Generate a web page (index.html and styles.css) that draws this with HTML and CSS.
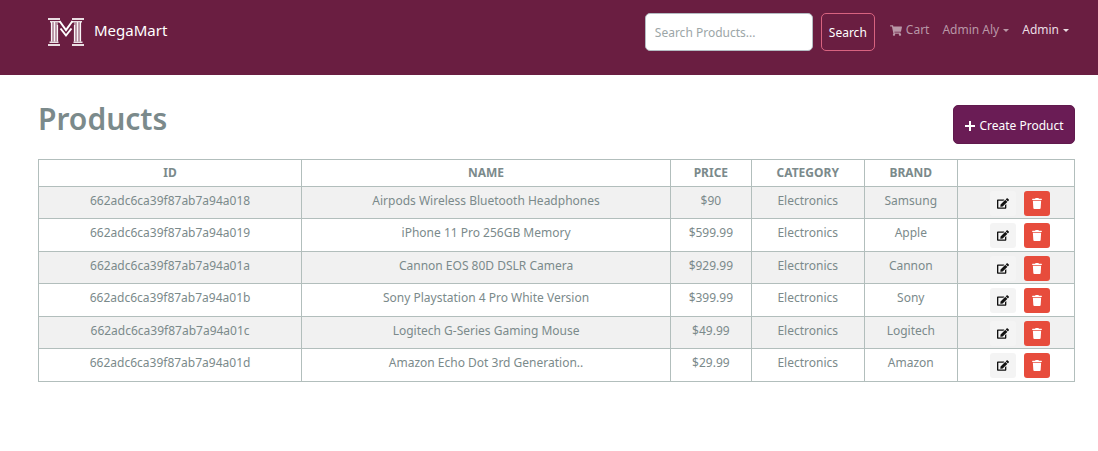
FILE: index.html
```html
<!DOCTYPE html>
<html lang="en">
<head>
<meta charset="utf-8">
<meta name="viewport" content="width=device-width, initial-scale=1">
<title>MegaMart - Products</title>
<link rel="stylesheet" href="styles.css">
</head>
<body>
<svg class="sprite" aria-hidden="true">
  <symbol id="edit" viewBox="0 0 576 512"><path d="M402.6 83.2l90.2 90.2c3.8 3.8 3.8 10 0 13.8L274.400 405.600l-92.800 10.300c-12.400 1.400-22.900-9.100-21.500-21.500l10.300-92.800L388.800 83.200c3.800-3.800 10-3.800 13.800 0zm162-22.900l-48.800-48.800c-15.200-15.200-39.900-15.200-55.200 0l-35.400 35.400c-3.800 3.800-3.800 10 0 13.800l90.200 90.200c3.800 3.800 10 3.800 13.800 0l35.400-35.400c15.200-15.300 15.200-40 0-55.200zM384 346.200V448H64V128h229.800c3.200 0 6.200-1.300 8.500-3.500l40-40c7.600-7.600 2.200-20.500-8.500-20.500H48C21.500 64 0 85.500 0 112v352c0 26.500 21.500 48 48 48h352c26.500 0 48-21.500 48-48V306.200c0-10.700-12.900-16-20.500-8.500l-40 40c-2.200 2.300-3.500 5.300-3.500 8.500z"/></symbol>
  <symbol id="trash" viewBox="0 0 448 512"><path d="M432 32H312l-9.400-18.700A24 24 0 0 0 281.100 0H166.800a23.700 23.700 0 0 0-21.400 13.300L136 32H16A16 16 0 0 0 0 48v32a16 16 0 0 0 16 16h416a16 16 0 0 0 16-16V48a16 16 0 0 0-16-16zM53.200 467a48 48 0 0 0 47.900 45h245.800a48 48 0 0 0 47.900-45L416 128H32z"/></symbol>
</svg>
<header class="navbar">
  <a class="brand" href="#">
    <svg class="logo" viewBox="0 0 36 30" aria-hidden="true" fill="none" stroke="#fff">
      <path stroke-width="2" opacity=".85" d="M0 2H12M24 2H36M0 28H12M24 28H36"/>
      <path stroke-width="1.500" opacity=".85" d="M2 4.800H12M24 4.800H34M1.500 25.300H10.500M25.500 25.300H34.500"/>
      <path stroke-width="7" opacity=".5" d="M6.500 5.500V24.500M29.500 5.500V24.500"/>
      <path stroke-width="1.200" opacity=".9" d="M3.500 5V24.500M6.500 5V24.500M9.500 8V24.500M26.500 8V24.500M29.500 5V24.500M32.500 5V24.500"/>
      <path stroke-width="2" d="M11.500 4L18 13L24.500 4M12.500 11.500L18 18.500L23.500 11.500"/>
    </svg>
    <span class="brand-name">MegaMart</span>
  </a>
  <div class="tools">
    <form class="search" role="search">
      <input class="search-input" type="search" placeholder="Search Products..." aria-label="Search products">
      <button class="search-button" type="submit">Search</button>
    </form>
    <nav class="links">
      <a class="link" href="#"><svg class="cart" viewBox="0 0 576 512" aria-hidden="true"><path d="M528.1 301.300l47.300-208C578.800 78.300 567.400 64 552 64H159.200l-9.200-44.800C147.800 8 137.900 0 126.500 0H24C10.700 0 0 10.700 0 24v16c0 13.300 10.700 24 24 24h69.900l70.200 343.400C147.300 417.100 136 435.200 136 456c0 30.900 25.100 56 56 56s56-25.100 56-56c0-15.700-6.400-29.800-16.800-40h209.600C430.400 426.200 424 440.300 424 456c0 30.900 25.100 56 56 56s56-25.100 56-56c0-22.200-12.900-41.300-31.600-50.400l5.500-24.300c3.400-15-8-29.300-23.400-29.300H218.100l-6.500-32h293.100c11.200 0 20.900-7.800 23.400-18.700z"/></svg>Cart</a>
      <button class="link menu" type="button" aria-haspopup="true">Admin Aly</button>
      <button class="link menu active" type="button" aria-haspopup="true">Admin</button>
    </nav>
  </div>
</header>
<main class="content">
  <div class="heading">
    <h1 class="title">Products</h1>
    <button class="create" type="button"><svg class="plus" viewBox="0 0 12 12" aria-hidden="true"><path d="M5 1h2v4h4v2H7v4H5V7H1V5h4z"/></svg>Create Product</button>
  </div>
  <table class="products">
    <colgroup><col class="col-id"><col class="col-name"><col class="col-price"><col class="col-category"><col class="col-brand"><col class="col-actions"></colgroup>
    <thead><tr><th>ID</th><th>NAME</th><th>PRICE</th><th>CATEGORY</th><th>BRAND</th><th></th></tr></thead>
    <tbody>
      <tr><td>662adc6ca39f87ab7a94a018</td><td>Airpods Wireless Bluetooth Headphones</td><td>$90</td><td>Electronics</td><td>Samsung</td><td><div class="actions"><a class="action" href="#" aria-label="Edit"><svg class="icon"><use href="#edit"/></svg></a><button class="action delete" type="button" aria-label="Delete"><svg class="icon"><use href="#trash"/></svg></button></div></td></tr>
      <tr><td>662adc6ca39f87ab7a94a019</td><td>iPhone 11 Pro 256GB Memory</td><td>$599.99</td><td>Electronics</td><td>Apple</td><td><div class="actions"><a class="action" href="#" aria-label="Edit"><svg class="icon"><use href="#edit"/></svg></a><button class="action delete" type="button" aria-label="Delete"><svg class="icon"><use href="#trash"/></svg></button></div></td></tr>
      <tr><td>662adc6ca39f87ab7a94a01a</td><td>Cannon EOS 80D DSLR Camera</td><td>$929.99</td><td>Electronics</td><td>Cannon</td><td><div class="actions"><a class="action" href="#" aria-label="Edit"><svg class="icon"><use href="#edit"/></svg></a><button class="action delete" type="button" aria-label="Delete"><svg class="icon"><use href="#trash"/></svg></button></div></td></tr>
      <tr><td>662adc6ca39f87ab7a94a01b</td><td>Sony Playstation 4 Pro White Version</td><td>$399.99</td><td>Electronics</td><td>Sony</td><td><div class="actions"><a class="action" href="#" aria-label="Edit"><svg class="icon"><use href="#edit"/></svg></a><button class="action delete" type="button" aria-label="Delete"><svg class="icon"><use href="#trash"/></svg></button></div></td></tr>
      <tr><td>662adc6ca39f87ab7a94a01c</td><td>Logitech G-Series Gaming Mouse</td><td>$49.99</td><td>Electronics</td><td>Logitech</td><td><div class="actions"><a class="action" href="#" aria-label="Edit"><svg class="icon"><use href="#edit"/></svg></a><button class="action delete" type="button" aria-label="Delete"><svg class="icon"><use href="#trash"/></svg></button></div></td></tr>
      <tr><td>662adc6ca39f87ab7a94a01d</td><td>Amazon Echo Dot 3rd Generation..</td><td>$29.99</td><td>Electronics</td><td>Amazon</td><td><div class="actions"><a class="action" href="#" aria-label="Edit"><svg class="icon"><use href="#edit"/></svg></a><button class="action delete" type="button" aria-label="Delete"><svg class="icon"><use href="#trash"/></svg></button></div></td></tr>
    </tbody>
  </table>
</main>
</body>
</html>
```
FILE: styles.css
```css
* { box-sizing: border-box; }

body {
  margin: 0;
  background: #fff;
  color: #7b8a8b;
  font: 12px/18px "Noto Sans", "Open Sans", sans-serif;
}

button, input { font: inherit; }
button { cursor: pointer; }
a { color: inherit; text-decoration: none; }
.sprite { display: none; }

.navbar {
  display: flex;
  justify-content: space-between;
  align-items: flex-start;
  padding: 13px 29px 24px 48px;
  background: #6a1e41;
}

.brand {
  display: flex;
  align-items: center;
  gap: 10px;
  height: 38px;
  color: #fff;
  font-size: 15px;
}

.brand-name { padding-bottom: 4px; }
.logo { width: 36px; height: 30px; }

.tools { display: flex; align-items: flex-start; gap: 15px; }
.search { display: flex; gap: 8px; }

.search-input {
  width: 168px;
  height: 38px;
  padding: 0 9px;
  border: 1px solid #b4bcc2;
  border-radius: 5px;
  background: #fff;
  color: #7b8a8b;
  appearance: none;
}

.search-input::placeholder { color: #9ca6a7; opacity: 1; }

.search-button {
  width: 54px;
  height: 38px;
  padding: 2px 0 0;
  border: 1px solid #d86380;
  border-radius: 5px;
  background: transparent;
  color: #fff;
}

.links { display: flex; gap: 13px; height: 34px; }

.link {
  display: flex;
  align-items: center;
  padding: 0;
  border: 0;
  background: none;
  color: #b997a7;
}

.cart { width: 12px; height: 11px; margin-right: 4px; fill: currentColor; }

.menu::after {
  content: "";
  margin-left: 4px;
  border: 3px solid transparent;
  border-top-color: currentColor;
  border-bottom: 0;
}

.active { color: #eadde3; }

.content { padding: 24px 23px 24px 38px; }

.heading {
  display: flex;
  justify-content: space-between;
  align-items: flex-end;
  margin-bottom: 15px;
}

.title {
  margin: 0;
  font-size: 30px;
  font-weight: 600;
  line-height: 40px;
  align-self: flex-start;
}

.create {
  display: flex;
  align-items: center;
  justify-content: center;
  gap: 3px;
  width: 122px;
  height: 39px;
  margin-top: 6px;
  padding: 2px 0 0;
  border: 1px solid #601a4d;
  border-radius: 5px;
  background: #6a1c55;
  color: #fff;
}

.plus { width: 12px; height: 12px; fill: currentColor; }

.products {
  width: 100%;
  table-layout: fixed;
  border-collapse: collapse;
  text-align: center;
}

.col-id { width: 25.4%; }
.col-name { width: 35.6%; }
.col-price { width: 7.8%; }
.col-category { width: 10.9%; }
.col-brand { width: 9%; }
.col-actions { width: 11.3%; }

.products th, .products td {
  padding: 4px;
  border: 1px solid #b2bebc;
  vertical-align: top;
}

.products th { font-weight: 700; }
.products td { padding-top: 5px; }
.products tbody tr { height: 33px; }
.products tbody tr:nth-child(odd) { height: 32px; background: #f1f1f1; }
.products td:last-child { padding: 4px 4px 2px; }

.actions { display: flex; justify-content: center; gap: 8px; padding-left: 8px; }

.action {
  display: flex;
  align-items: center;
  justify-content: center;
  width: 26px;
  height: 25px;
  padding: 0;
  border: 0;
  border-radius: 3px;
  background: #f4f4f4;
  color: #111;
}

.delete { background: #e74c3c; color: #fff; }
.icon { width: 12px; height: 11px; fill: currentColor; }
```
